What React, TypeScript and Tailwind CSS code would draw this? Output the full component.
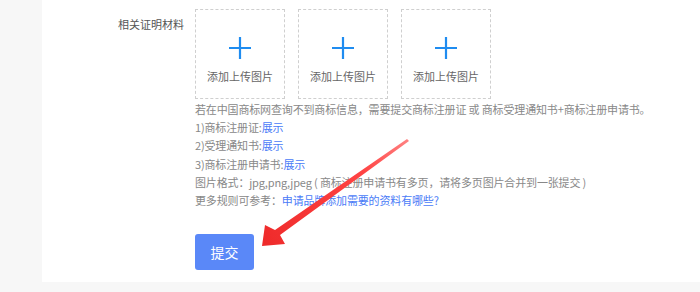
import React from 'react';

const font = { fontFamily: '"Noto Sans CJK SC", "Noto Sans", sans-serif' };

function UploadBox() {
  return (
    <div className="w-[90px] h-[90px] border border-dashed border-[#cfcfcf] flex flex-col items-center">
      <svg width="22" height="22" viewBox="0 0 22 22" className="mt-[27px]">
        <path d="M11 0v22M0 11h22" stroke="#1f8cf0" strokeWidth="2.2" />
      </svg>
      <div className="mt-[9px] text-[11px] leading-[16px] text-[#666]">添加上传图片</div>
    </div>
  );
}

export default function App() {
  return (
    <div className="relative w-[700px] h-[292px] bg-[#f7f7f7] flex overflow-hidden" style={font}>
      <div className="w-[42px] shrink-0" />
      <div className="flex-1 h-[282px] bg-white flex">
        <div className="w-[142px] shrink-0 text-right text-[11px] leading-[16px] text-[#555] pt-[16px]">相关证明材料</div>
        <div className="ml-[11px] pt-[9px]">
          <div className="flex gap-[13px]">
            <UploadBox />
            <UploadBox />
            <UploadBox />
          </div>
          <div className="mt-[1px] text-[11px] leading-[18.2px] text-[#888] tracking-[-0.15px]">
            <div>若在中国商标网查询不到商标信息，需要提交商标注册证 或 商标受理通知书+商标注册申请书。</div>
            <div>1)商标注册证:<span className="text-[#4a7bf7]">展示</span></div>
            <div>2)受理通知书:<span className="text-[#4a7bf7]">展示</span></div>
            <div>3)商标注册申请书:<span className="text-[#4a7bf7]">展示</span></div>
            <div>图片格式：jpg,png,jpeg ( 商标注册申请书有多页，请将多页图片合并到一张提交 )</div>
            <div>更多规则可参考：<span className="text-[#4a7bf7]">申请品牌添加需要的资料有哪些?</span></div>
          </div>
          <button className="mt-[25px] w-[59px] h-[36px] rounded-[3px] bg-[#5a88f8] text-white text-[14px]">提交</button>
        </div>
      </div>
      <svg className="absolute left-0 top-0" width="700" height="292">
        <defs>
          <linearGradient id="arr" x1="407" y1="140" x2="262" y2="246" gradientUnits="userSpaceOnUse">
            <stop offset="0" stopColor="#ff8080" />
            <stop offset="0.3" stopColor="#f44" />
            <stop offset="1" stopColor="#ee2a2a" />
          </linearGradient>
        </defs>
        <polygon points="407,139 409,141 280,235 285,244 262,246 265,225 275,230" fill="url(#arr)" />
      </svg>
    </div>
  );
}
